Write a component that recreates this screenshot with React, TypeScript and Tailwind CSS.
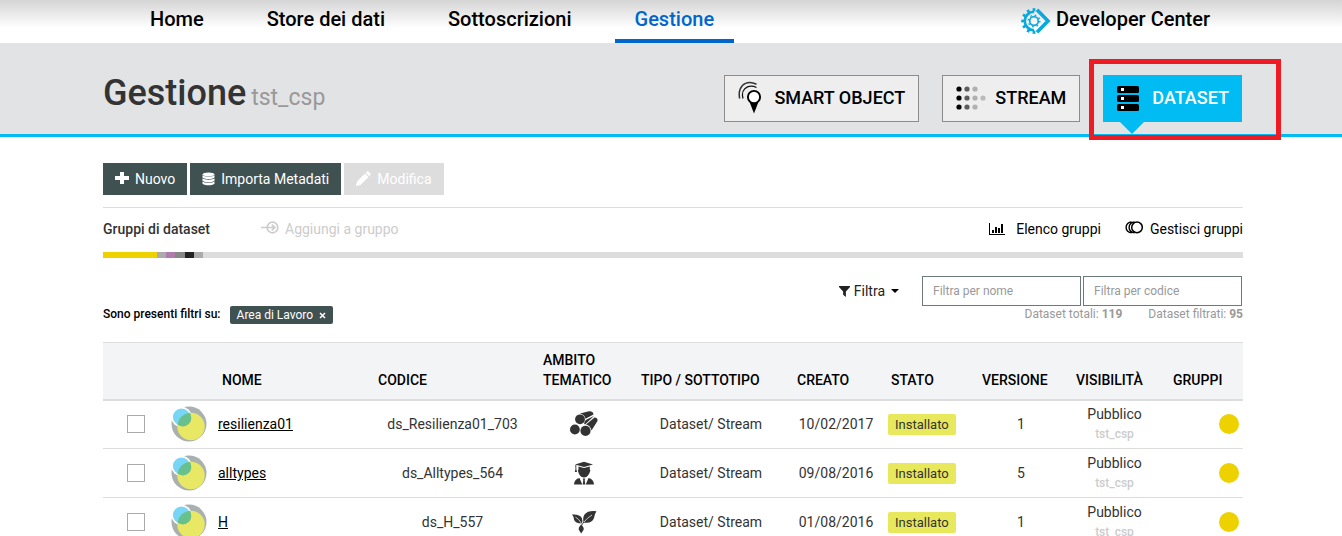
import React from "react";

function Gear() {
  const teeth = [90, 120, 150, 180, 210, 240, 270];
  return (
    <svg width="30" height="26" viewBox="0 0 30 26" aria-hidden="true">
      <g stroke="#0aa9dc" fill="none">
        <path d="M13 3.8A9.200 9.200 0 0 0 13 22.200" strokeWidth="2.600" />
        {teeth.map((a) => (
          <path key={a} d="M22.600 13H25.800" strokeWidth="2.800" transform={`rotate(${a} 13 13)`} />
        ))}
        <circle cx="13" cy="13" r="4.300" strokeWidth="1.700" />
        <circle cx="13" cy="13" r="5.800" strokeWidth="1.400" strokeDasharray="1.600 2.955" />
        <path d="M16 1.800L27 13L16 24.200" strokeWidth="3.600" />
      </g>
    </svg>
  );
}

function SmartIcon() {
  return (
    <svg width="24" height="34" viewBox="0 0 24 34" aria-hidden="true">
      <path d="M1.700 17.500C.2 11 2.300 4.600 7.500 2.400C11 1 15 1.600 18.500 3.200" fill="none" stroke="#333" strokeWidth="1.500" />
      <path d="M5 17.500C3.500 12 5.500 7.500 9.500 5.800C12.500 4.600 15.500 5 18.500 6.500" fill="none" stroke="#111" strokeWidth="1.300" />
      <path d="M10.800 19L16 32.500L21.200 19Z" fill="#000" />
      <circle cx="16" cy="16" r="6.100" fill="#fff" stroke="#000" strokeWidth="1.900" />
    </svg>
  );
}

function StreamIcon() {
  const dots: [number, number, string][] = [];
  [3, 12, 21].forEach((y) => {
    dots.push([3, y, "#000"], [11, y, "#5c5c5c"], [19, y, "#b0b0b0"]);
  });
  dots.push([27, 12, "#bbb"]);
  return (
    <svg width="30" height="24" viewBox="0 0 30 24" aria-hidden="true">
      {dots.map(([x, y, c]) => (
        <circle key={`${x}-${y}`} cx={x} cy={y} r="2.600" fill={c} />
      ))}
    </svg>
  );
}

function DatasetIcon() {
  return (
    <svg width="22" height="25" viewBox="0 0 22 25" aria-hidden="true">
      {[0, 9, 18].map((y) => (
        <g key={y}>
          <rect y={y} width="22" height="7" rx="1.500" />
          <rect x="4" y={y + 2} width="3" height="3" fill="#fff" />
        </g>
      ))}
    </svg>
  );
}

function Plus() {
  return (
    <svg width="14" height="14" viewBox="0 0 14 14" fill="currentColor" className="mb-px" aria-hidden="true">
      <path d="M5 1H9V5H14V9H9V13H5V9H0V5H5Z" />
    </svg>
  );
}

function Stack() {
  return (
    <svg width="13" height="14" viewBox="0 0 14 14" fill="currentColor" aria-hidden="true">
      <ellipse cx="7" cy="2.100" rx="6.500" ry="2.100" />
      {[3, 6.3, 9.6].map((y) => (
        <path key={y} transform={`translate(0 ${y})`} d="M.5 0C2 2 12 2 13.500 0V2.200C12.500 4.700 1.500 4.700 .5 2.200Z" />
      ))}
    </svg>
  );
}

function Pencil() {
  return (
    <svg width="15" height="15" viewBox="0 0 15 15" fill="currentColor" className="mb-px" aria-hidden="true">
      <path d="M0 15L1 10.500L9 2.500L12.500 6L4.500 14ZM9.800 1.700L11 .5Q11.700 0 12.400 .6L14.400 2.600Q15 3.300 14.500 4L13.300 5.200Z" />
    </svg>
  );
}

function AddToGroup() {
  return (
    <svg className="mb-1" width="18" height="13" viewBox="0 0 18 13" fill="none" stroke="currentColor" aria-hidden="true">
      <circle cx="11.500" cy="6.500" r="5.300" strokeWidth="1.700" />
      <path d="M0 6.500H13.500M10.800 3.700L13.800 6.500L10.800 9.300" strokeWidth="1.700" />
    </svg>
  );
}

function Chart() {
  return (
    <svg width="16" height="12" viewBox="0 0 16 12" aria-hidden="true">
      <path d="M0 0H1V11H16V12H0ZM3 7H5V10H3ZM6 4H8V10H6ZM9 5H11V10H9ZM12 1H14V10H12Z" />
    </svg>
  );
}

function Rings() {
  return (
    <svg className="mb-1" width="18" height="13" viewBox="0 0 18 13" fill="none" stroke="#000" aria-hidden="true">
      <path d="M6.500 1A5.400 5.400 0 0 0 6.500 11.800M9.500 1A5.400 5.400 0 0 0 9.500 11.800" strokeWidth="1.400" />
      <circle cx="12" cy="6.400" r="5.300" strokeWidth="1.500" />
    </svg>
  );
}

function Funnel() {
  return (
    <svg width="11" height="11" viewBox="0 0 12 12" fill="#222" aria-hidden="true">
      <path d="M0 0H12V1L7.500 6V12L4.500 9.500V6L0 1Z" />
    </svg>
  );
}

function DatasetLogo() {
  return (
    <svg className="block" width="36" height="36" viewBox="0 0 36 36" aria-hidden="true">
      <circle cx="18" cy="18" r="17.500" fill="#a9b0b0" />
      <circle cx="10.500" cy="11" r="10.200" fill="#fff" />
      <circle cx="20" cy="20.500" r="13.700" fill="#e8e864" />
      <circle cx="10.500" cy="11" r="8.600" fill="#77d6f5" />
      <path d="M6.510 18.620A13.700 13.700 0 0 1 18.780 6.850A8.600 8.600 0 0 1 6.510 18.620Z" fill="#68c08c" />
    </svg>
  );
}

function Logs() {
  return (
    <svg width="28" height="26" viewBox="0 0 28 26" fill="#333" aria-hidden="true">
      <path d="M10 2.500L19 .3Q23 0 23.500 3.500L15.500 7.800Q14.500 3.500 10 2.500Z" />
      <path d="M15.800 9L24 5L15 13.500Q13.500 13 14.500 11Z" />
      <path d="M16 13.500L24.500 6.500Q28 6.500 27.500 10L21.500 19.500Q20.500 14.500 16 13.500Z" />
      <circle cx="10" cy="8.300" r="4.900" />
      <circle cx="4.900" cy="18.500" r="4.900" />
      <circle cx="15.500" cy="19.800" r="5.100" />
    </svg>
  );
}

function Graduate() {
  return (
    <svg width="20" height="24" viewBox="0 0 20 24" fill="#333" aria-hidden="true">
      <path d="M1 3.500L10 .8L19 3.500L10 6Z" />
      <path d="M4.500 5.500L10 7L15.800 5.500V8.500Q16.800 9 16 10.800L15 13Q13 16.500 10 16.500Q7 16.500 5 13L4.200 10.800Q3.500 9 4.500 8.500Z" />
      <path d="M1.300 4H2.300V8L3 11H.8L1.500 8Z" />
      <path d="M0 23.500Q.3 18 5.500 17L8.300 23.500ZM20 23.500Q19.700 18 14.500 17L11.700 23.500Z" />
      <path d="M8.700 17.500H11.300L10.700 19L11.300 23.500H8.700L9.300 19Z" />
    </svg>
  );
}

function Leaves() {
  return (
    <svg width="26" height="24" viewBox="0 0 26 24" fill="#333" aria-hidden="true">
      <path d="M1 4.500Q9 4 10.800 8Q11.800 10.500 11 13.500Q4 13.500 3 9.500Q2.500 6 1 4.500Z" />
      <path d="M25.500 1.300Q17 .3 13.500 4.500Q11.500 7.500 12.500 12.500Q21 14 23 8Q23.500 4 25.500 1.300Z" />
      <path d="M10.200 14.500Q13.500 17.500 12.500 20L10.200 23.500L7.900 20Q7 17.500 10.200 14.500Z" />
      <path d="M4.500 7Q8 9 10.500 13.500M13 12Q16 8 21 5" fill="none" stroke="#fff" strokeWidth=".7" />
      <path d="M10.800 15Q11.500 13.500 13 12" fill="none" stroke="#333" strokeWidth="1" />
    </svg>
  );
}

const nav = ["Home", "Store dei dati", "Sottoscrizioni", "Gestione"];

const groups = [
  "w-[54px] bg-[#edd200]",
  "w-[9px] bg-[#ababab]",
  "w-[9px] bg-[#af7dab]",
  "w-[10px] bg-[#878787]",
  "w-[9px] bg-[#222]",
  "w-[9px] bg-[#ababab]",
];

const rows = [
  { name: "resilienza01", code: "ds_Resilienza01_703", icon: <Logs />, date: "10/02/2017", version: 1 },
  { name: "alltypes", code: "ds_Alltypes_564", icon: <Graduate />, date: "09/08/2016", version: 5 },
  { name: "H", code: "ds_H_557", icon: <Leaves />, date: "01/08/2016", version: 1 },
];

const columns = [
  { label: "", width: "w-[66px]" },
  { label: "", width: "w-[45px]" },
  { label: "Nome", width: "w-[156px]" },
  { label: "Codice", width: "w-[165px]" },
  { label: "Ambito tematico", width: "w-[98px]" },
  { label: "Tipo / Sottotipo", width: "w-[156px]" },
  { label: "Creato", width: "w-[94px]" },
  { label: "Stato", width: "w-[91px]" },
  { label: "Versione", width: "w-[94px]" },
  { label: "Visibilità", width: "w-[97px]" },
  { label: "Gruppi", width: "w-[78px]" },
];

const tab = "flex h-[47px] items-center border border-[#8c8c8c] bg-[#eee] px-[13px] pb-px text-lg font-medium text-black uppercase";
const tool = "flex h-8 items-center gap-[6px] px-3 pb-px text-sm";
const search = "h-[30px] w-[159px] border border-[#6c7a7a] bg-white px-[10px] text-xs text-[#333] placeholder:text-[#999]";

export default function App() {
  return (
    <div className="h-screen overflow-hidden bg-white font-[Roboto,'Liberation_Sans',sans-serif] text-sm leading-5 text-[#333]">
      <header className="bg-linear-to-b from-[#d5d5d5] to-white to-[28px]">
        <nav className="mx-auto flex h-[43px] max-w-[1144px] items-stretch gap-[23px] pr-[33px] pl-[31px] text-xl font-medium text-black">
          {nav.map((n) => (
            <a
              key={n}
              href="#"
              className={
                n === "Gestione"
                  ? "border-b-4 border-[#0066cc] px-5 pt-[5px] text-[#0066cc]"
                  : "px-5 pt-[5px]"
              }
            >
              {n}
            </a>
          ))}
          <a href="#" className="ml-auto flex items-start gap-[5px] pt-[5px]">
            <span className="pt-[3px]"><Gear /></span>
            Developer Center
          </a>
        </nav>
      </header>

      <section className="border-b-3 border-[#00bcf2] bg-[#e2e3e5]">
        <div className="mx-auto flex h-[91px] max-w-[1144px] items-start pt-8 pr-px pl-1">
          <h1 className="text-4xl leading-9 text-[#333]">
            <span className="font-medium">Gestione</span>{" "}
            <small className="-ml-1 text-[23px] text-[#999]">tst_csp</small>
          </h1>
          <div className="ml-auto flex gap-[23px]">
            <button className={`${tab} gap-3`}><SmartIcon />Smart Object</button>
            <button className={`${tab} gap-[9px]`}><StreamIcon />Stream</button>
            <div className="relative">
              <button className="flex h-[47px] items-center gap-[13px] bg-[#00bcf2] pr-[13px] pb-px pl-[14px] text-lg font-medium text-white">
                <span className="text-black"><DatasetIcon /></span>DATASET
              </button>
              <svg className="absolute top-[47px] left-[17px]" width="24" height="12" viewBox="0 0 24 12" fill="#00bcf2" aria-hidden="true">
                <path d="M0 0H24L12 12Z" />
              </svg>
              <div className="pointer-events-none absolute -top-4 -left-[14px] h-[81px] w-48 border-5 border-[#ed1c24]" />
            </div>
          </div>
        </div>
      </section>

      <main className="mx-auto max-w-[1144px] pt-[26px] pl-1">
        <div className="flex gap-[3px] pb-3">
          <button className={`${tool} bg-[#405152] text-white`}><Plus />Nuovo</button>
          <button className={`${tool} bg-[#405152] text-white`}><Stack />Importa Metadati</button>
          <button disabled className={`${tool} bg-[#ddd] text-white`}><Pencil />Modifica</button>
        </div>

        <div className="flex items-center border-t border-[#ddd] pt-[11px] pb-[13px]">
          <h2 className="font-medium">Gruppi di dataset</h2>
          <button disabled className="ml-[51px] flex items-center gap-[6px] text-[#ccc]"><AddToGroup />Aggiungi a gruppo</button>
          <a href="#" className="ml-auto flex items-center gap-[11px] text-black"><Chart />Elenco gruppi</a>
          <a href="#" className="ml-6 flex items-center gap-[7px] text-black"><Rings />Gestisci gruppi</a>
        </div>

        <div className="flex h-[6px] bg-[#ddd]">
          {groups.map((g, i) => <div key={i} className={g} />)}
        </div>

        <div className="flex items-center justify-end pt-[18px] pr-px">
          <button className="mr-[23px] flex items-center gap-1 text-[#222]">
            <Funnel />Filtra
            <svg className="ml-[2px]" width="8" height="4" viewBox="0 0 8 4" aria-hidden="true"><path d="M0 0H8L4 4Z" /></svg>
          </button>
          <div className="flex gap-[2px]">
            <input aria-label="Filtra per nome" placeholder="Filtra per nome" className={search} />
            <input aria-label="Filtra per codice" placeholder="Filtra per codice" className={search} />
          </div>
        </div>

        <div className="flex h-9 items-start text-xs leading-4">
          <span className="font-medium text-black">Sono presenti filtri su:</span>
          <span className="ml-[9px] flex h-[18px] items-center gap-[6px] rounded-xs bg-[#405152] px-[7px] text-white">
            Area di Lavoro
            <button aria-label="Rimuovi filtro">
              <svg width="7" height="7" viewBox="0 0 7 7" stroke="#fff" strokeWidth="1.500" aria-hidden="true"><path d="M1 1L6 6M6 1L1 6" /></svg>
            </button>
          </span>
          <span className="ml-auto text-[#999]">Dataset totali: <b>119</b></span>
          <span className="ml-[26px] text-[#999]">Dataset filtrati: <b>95</b></span>
        </div>

        <table className="w-full table-fixed border-collapse">
          <thead>
            <tr className="h-[57px] border-t border-b-2 border-[#ddd] bg-[#f3f4f6]">
              {columns.map((c, i) => (
                <th key={i} className={`${c.width} pb-[9px] pl-2 text-left align-bottom font-medium text-black uppercase`}>
                  {c.label}
                </th>
              ))}
            </tr>
          </thead>
          <tbody>
            {rows.map((r) => (
              <tr key={r.name} className="h-[49px] border-b border-[#ddd] text-center">
                <td>
                  <input
                    type="checkbox"
                    aria-label={`Seleziona ${r.name}`}
                    className="mx-auto block size-[18px] appearance-none border border-[#aaa] bg-white checked:bg-[#405152]"
                  />
                </td>
                <td className="pl-[2px]"><DatasetLogo /></td>
                <td className="pl-1 text-left"><a href="#" className="text-black underline">{r.name}</a></td>
                <td>{r.code}</td>
                <td><div className="flex justify-center">{r.icon}</div></td>
                <td>Dataset/ Stream</td>
                <td>{r.date}</td>
                <td className="pl-[5px] text-left">
                  <span className="inline-block rounded-xs bg-[#e8e85c] px-[7px] text-[13px] leading-[21px]">Installato</span>
                </td>
                <td>{r.version}</td>
                <td className="pr-1">
                  <div>Pubblico</div>
                  <div className="text-xs leading-5 font-medium text-[#ccc]">tst_csp</div>
                </td>
                <td className="pr-1"><div className="ml-auto size-5 rounded-full bg-[#edd200]" /></td>
              </tr>
            ))}
          </tbody>
        </table>
      </main>
    </div>
  );
}
